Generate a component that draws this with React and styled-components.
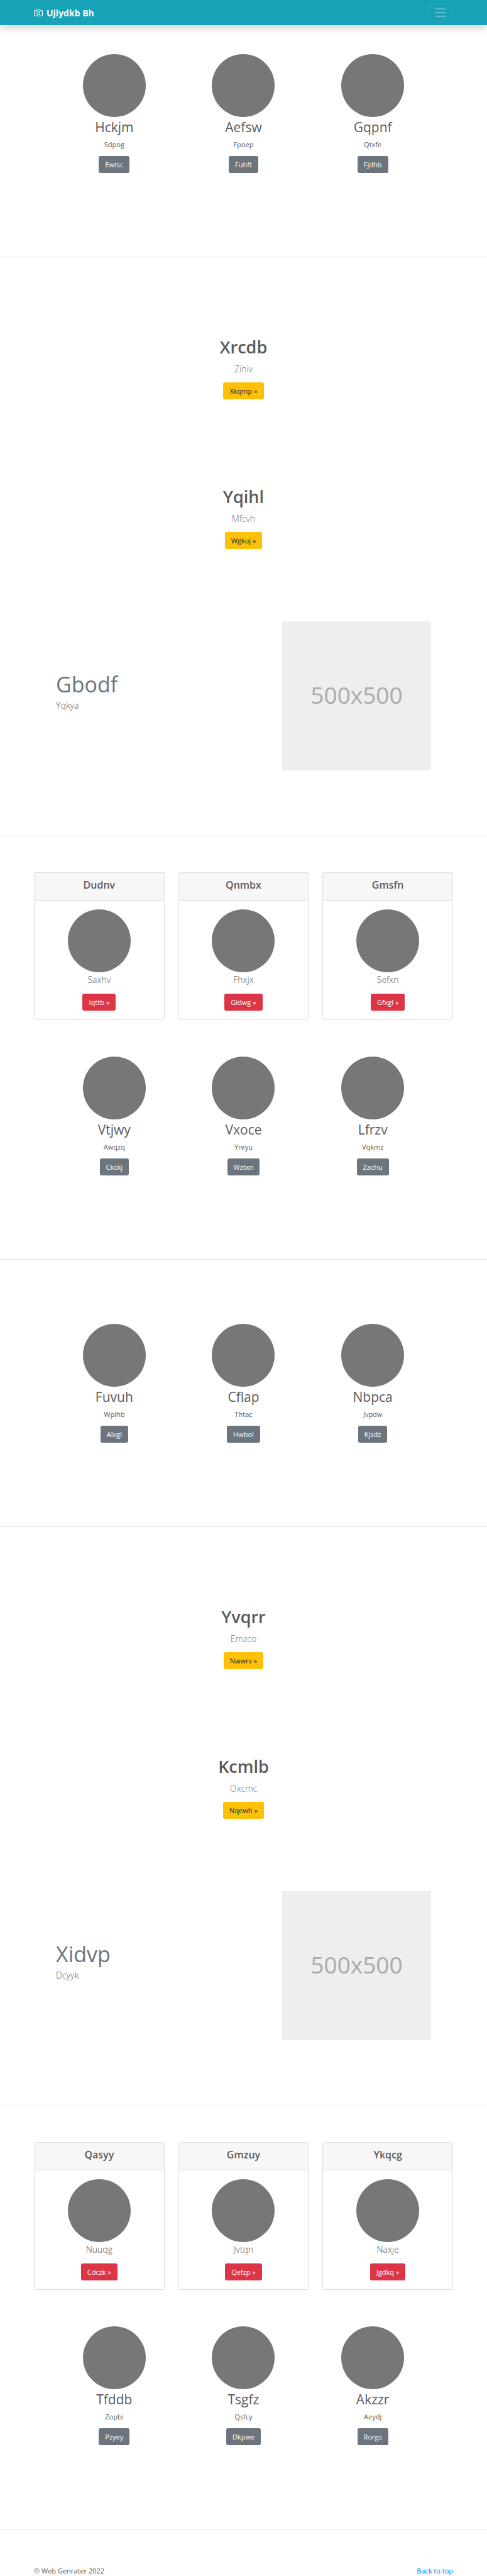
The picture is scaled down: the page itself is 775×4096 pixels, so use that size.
import React from "react";
import styled, { createGlobalStyle } from "styled-components";

const GlobalStyle = createGlobalStyle`
  *, *::before, *::after { box-sizing: border-box; }
  body {
    margin: 0;
    background: #fff;
    color: #5a5a5a;
    font-family: "Open Sans", "Noto Sans", sans-serif;
    font-size: 11px;
    line-height: 17px;
  }
  h1, h2, h3, h4, p { margin: 0; }
`;

const Container = styled.div`
  width: 100%;
  max-width: 689px;
  margin: 0 auto;
  padding: 0 11px;
`;

const Navbar = styled.header`
  background: #17a2b8;
  box-shadow: 0 6px 11px rgba(0, 0, 0, 0.15);
`;

const NavInner = styled(Container)`
  display: flex;
  align-items: center;
  justify-content: space-between;
  min-height: 40px;
`;

const Brand = styled.a`
  display: flex;
  align-items: center;
  gap: 6px;
  color: #fff;
  font-size: 14px;
  line-height: 21px;
  font-weight: 700;
  text-decoration: none;
`;

const Toggler = styled.button`
  display: flex;
  align-items: center;
  justify-content: center;
  width: 40px;
  height: 28px;
  padding: 0;
  border: 1px solid rgba(255, 255, 255, 0.1);
  border-radius: 3px;
  background: transparent;
  color: rgba(255, 255, 255, 0.5);
`;

const Divider = styled.hr`
  height: 1px;
  margin: 0;
  border: 0;
  background: rgba(0, 0, 0, 0.1);
`;

const palette = {
  secondary: { bg: "#6c757d", fg: "#fff" },
  warning: { bg: "#ffc107", fg: "#212529" },
  danger: { bg: "#dc3545", fg: "#fff" },
};

const Button = styled.button`
  height: 27px;
  padding: 0 10px;
  border: 0;
  border-radius: 3px;
  background: ${({ $tone }) => palette[$tone].bg};
  color: ${({ $tone }) => palette[$tone].fg};
  font: inherit;
`;

const Avatar = styled.div`
  width: 100px;
  height: 100px;
  border-radius: 50%;
  background: #777;
`;

const PeopleSection = styled(Container)`
  display: grid;
  grid-template-columns: repeat(3, 1fr);
  padding: ${({ $top }) => $top}px 36px 133px;
`;

const Person = styled.article`
  display: flex;
  flex-direction: column;
  align-items: center;
`;

const PersonName = styled.h2`
  margin-top: 2px;
  font-size: 21px;
  line-height: 28px;
  font-weight: 400;
`;

const PersonText = styled.p`
  margin: 5px 0 10px;
`;

const Lead = styled.p`
  color: ${({ $muted }) => ($muted ? "#6c757d" : "inherit")};
  font-size: 14px;
  line-height: 21px;
  font-weight: 300;
`;

const Heroes = styled.div`
  padding-top: 57px;
`;

const Hero = styled.section`
  display: flex;
  flex-direction: column;
  align-items: center;
  padding: 69px 11px;
`;

const HeroTitle = styled.h1`
  margin-bottom: 7px;
  font-size: 27px;
  line-height: 34px;
  font-weight: 600;
`;

const HeroLead = styled(Lead)`
  margin-bottom: 11px;
`;

const Featurette = styled(Container)`
  display: flex;
  align-items: center;
  justify-content: space-between;
  padding: 46px 46px 104px;
`;

const FeatureCopy = styled.div`
  margin-bottom: 14px;
`;

const FeatureTitle = styled.h2`
  margin-bottom: 1px;
  color: #6c757d;
  font-size: 34px;
  line-height: 43px;
  font-weight: 400;
`;

const Placeholder = styled.div`
  display: flex;
  align-items: center;
  justify-content: center;
  width: 237px;
  aspect-ratio: 1;
  padding-bottom: 4px;
  background: #eee;
  color: #aaa;
  font-size: 37px;
  line-height: 48px;
`;

const Deck = styled(Container)`
  display: grid;
  grid-template-columns: repeat(3, 1fr);
  gap: 22px;
  padding-top: 57px;
`;

const Card = styled.article`
  border: 1px solid rgba(0, 0, 0, 0.125);
  border-radius: 3px;
  text-align: center;
`;

const CardTitle = styled.h4`
  padding: 9px 14px 13px;
  border-bottom: 1px solid rgba(0, 0, 0, 0.125);
  background: rgba(0, 0, 0, 0.03);
  font-size: 16px;
  line-height: 21px;
  font-weight: 600;
`;

const CardBody = styled.div`
  display: flex;
  flex-direction: column;
  align-items: center;
  padding: 14px;
`;

const CardLead = styled(Lead)`
  margin: 1px 0 12px;
`;

const Footer = styled.footer`
  padding-top: 57px;
`;

const FooterInner = styled(Container)`
  display: flex;
  justify-content: space-between;
`;

const FooterLink = styled.a`
  color: #007bff;
  text-decoration: none;
`;

const CameraIcon = () => (
  <svg width="14" height="14" viewBox="0 0 24 24" fill="none" stroke="currentColor" strokeWidth="2" strokeLinecap="round" strokeLinejoin="round" aria-hidden="true">
    <path d="M23 19a2 2 0 0 1-2 2H3a2 2 0 0 1-2-2V8a2 2 0 0 1 2-2h4l2-3h6l2 3h4a2 2 0 0 1 2 2z" />
    <circle cx="12" cy="13" r="4" />
  </svg>
);

const MenuIcon = () => (
  <svg width="22" height="22" viewBox="0 0 30 30" fill="none" stroke="currentColor" strokeWidth="2" strokeLinecap="round" aria-hidden="true">
    <path d="M4 7h22M4 15h22M4 23h22" />
  </svg>
);

const People = ({ people, top }) => (
  <PeopleSection $top={top}>
    {people.map(([name, text, action]) => (
      <Person key={name}>
        <Avatar />
        <PersonName>{name}</PersonName>
        <PersonText>{text}</PersonText>
        <Button type="button" $tone="secondary">{action}</Button>
      </Person>
    ))}
  </PeopleSection>
);

const Showcase = ({ heroes, feature, cards, people }) => (
  <>
    <Divider />
    <Heroes>
      {heroes.map(([title, text, action]) => (
        <Hero key={title}>
          <HeroTitle>{title}</HeroTitle>
          <HeroLead $muted>{text}</HeroLead>
          <Button type="button" $tone="warning">{action} »</Button>
        </Hero>
      ))}
    </Heroes>
    <Featurette>
      <FeatureCopy>
        <FeatureTitle>{feature[0]}</FeatureTitle>
        <Lead>{feature[1]}</Lead>
      </FeatureCopy>
      <Placeholder>500x500</Placeholder>
    </Featurette>
    <Divider />
    <Deck>
      {cards.map(([title, text, action]) => (
        <Card key={title}>
          <CardTitle>{title}</CardTitle>
          <CardBody>
            <Avatar />
            <CardLead>{text}</CardLead>
            <Button type="button" $tone="danger">{action} »</Button>
          </CardBody>
        </Card>
      ))}
    </Deck>
    <People people={people} top={58} />
    <Divider />
  </>
);

const introPeople = [
  ["Hckjm", "Sdpog", "Ewtsc"],
  ["Aefsw", "Fpoep", "Fuhft"],
  ["Gqpnf", "Qtxfe", "Fjdhb"],
];

const middlePeople = [
  ["Fuvuh", "Wplhb", "Alxgl"],
  ["Cflap", "Thtac", "Hwbol"],
  ["Nbpca", "Jvpdw", "Kjsdz"],
];

const firstShowcase = {
  heroes: [
    ["Xrcdb", "Zihiv", "Xkqmp"],
    ["Yqihl", "Mfcvh", "Wgkuj"],
  ],
  feature: ["Gbodf", "Yqkya"],
  cards: [
    ["Dudnv", "Saxhv", "Iqttb"],
    ["Qnmbx", "Fhxjx", "Gldwg"],
    ["Gmsfn", "Sefxn", "Gfxgl"],
  ],
  people: [
    ["Vtjwy", "Awqzq", "Ckckj"],
    ["Vxoce", "Yreyu", "Wztxn"],
    ["Lfrzv", "Vqkmz", "Zachu"],
  ],
};

const secondShowcase = {
  heroes: [
    ["Yvqrr", "Emzco", "Nwwrv"],
    ["Kcmlb", "Oxcmc", "Nqewh"],
  ],
  feature: ["Xidvp", "Dcyyk"],
  cards: [
    ["Qasyy", "Nuuqg", "Cdczk"],
    ["Gmzuy", "Jvtqn", "Qefzp"],
    ["Ykqcg", "Naxje", "Jgdkq"],
  ],
  people: [
    ["Tfddb", "Zopbi", "Pzyey"],
    ["Tsgfz", "Qsfcy", "Dkpwe"],
    ["Akzzr", "Aeydj", "Rorgs"],
  ],
};

export default function App() {
  return (
    <>
      <GlobalStyle />
      <Navbar id="top">
        <NavInner as="nav">
          <Brand href="#top">
            <CameraIcon />
            Ujlydkb Bh
          </Brand>
          <Toggler type="button" aria-label="Toggle navigation">
            <MenuIcon />
          </Toggler>
        </NavInner>
      </Navbar>
      <main>
        <People people={introPeople} top={46} />
        <Showcase {...firstShowcase} />
        <People people={middlePeople} top={102} />
        <Showcase {...secondShowcase} />
      </main>
      <Footer>
        <FooterInner>
          <p>© Web Genrater 2022</p>
          <FooterLink href="#top">Back to top</FooterLink>
        </FooterInner>
      </Footer>
    </>
  );
}
